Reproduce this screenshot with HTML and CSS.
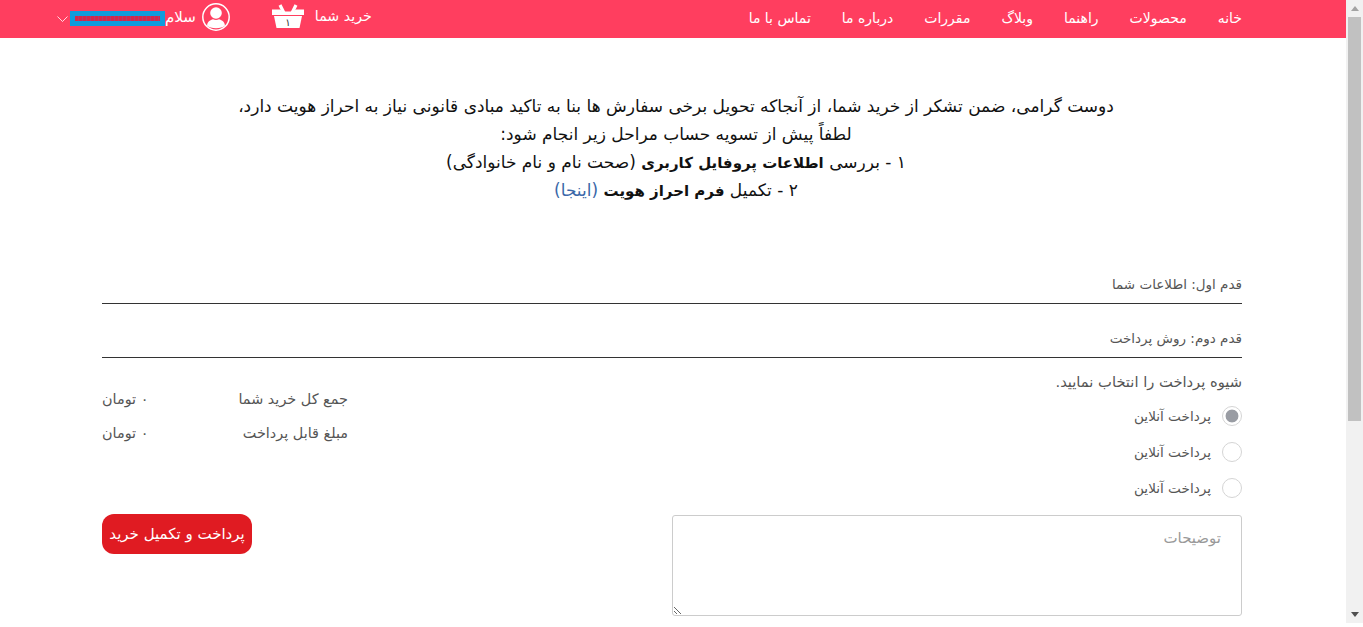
FILE: index.html
```html
<!DOCTYPE html>
<html lang="fa" dir="rtl">
<head>
    <meta charset="UTF-8">
    <meta name="viewport" content="width=device-width, initial-scale=1.0">
    <title>پرداخت و تکمیل خرید</title>
    <link rel="stylesheet" href="styles.css">
</head>
<body>
    <div class="window">
        <div class="scrollbar">
            <span class="arrow-up"></span>
            <span class="thumb"></span>
            <span class="arrow-down"></span>
        </div>
        <div class="page">
            <header class="topbar">
                <nav class="menu">
                    <a href="#">خانه</a>
                    <a href="#">محصولات</a>
                    <a href="#">راهنما</a>
                    <a href="#">وبلاگ</a>
                    <a href="#">مقررات</a>
                    <a href="#">درباره ما</a>
                    <a href="#">تماس با ما</a>
                </nav>
                <div class="topbar-left">
                    <a class="cart" href="#">
                        <span class="cart-label">خرید شما</span>
                        <span class="cart-icon">
                            <svg width="32" height="24" viewBox="0 0 32 24">
                                <path d="M8 1l4 8M24 1l-4 8" stroke="#fff" stroke-width="3.200" fill="none"/>
                                <path d="M0 5.500h8.500l1.500 2h12l1.500-2H32v5.500H0z" fill="#fff"/>
                                <path d="M2 12h28l-2.500 12h-23z" fill="#fff"/>
                            </svg>
                            <span class="cart-count">۱</span>
                        </span>
                    </a>
                    <div class="user">
                        <svg class="avatar" width="28" height="28" viewBox="0 0 28 28">
                            <circle cx="14" cy="14" r="13.200" fill="none" stroke="#fff" stroke-width="1.500"/>
                            <circle cx="14" cy="10" r="5.800" fill="#fff"/>
                            <path d="M5 22.500c.6-4.500 3.500-5.500 6-6.300 1.800 1 4.200 1 6 0 2.500.8 5.400 1.800 6 6.300-1.800 1.800-5 2.800-9 2.800s-7.200-1-9-2.800z" fill="#fff"/>
                        </svg>
                        <span class="hello">سلام</span>
                        <span class="username"><span class="scribble"></span></span>
                        <svg class="chevron" width="11" height="6" viewBox="0 0 11 6">
                            <path d="M.5.500l5 5 5-5" fill="none" stroke="#fff" stroke-opacity=".8"/>
                        </svg>
                    </div>
                </div>
            </header>

            <main class="container">
                <section class="notice">
                    <p>دوست گرامی، ضمن تشکر از خرید شما، از آنجاکه تحویل برخی سفارش ها بنا به تاکید مبادی قانونی نیاز به احراز هویت دارد،</p>
                    <p>لطفاً پیش از تسویه حساب مراحل زیر انجام شود:</p>
                    <p>۱ - بررسی <strong>اطلاعات پروفایل کاربری</strong> (صحت نام و نام خانوادگی)</p>
                    <p>۲ - تکمیل <strong>فرم احراز هویت</strong> <a href="#">(اینجا)</a></p>
                </section>

                <h2 class="step step-first">قدم اول: اطلاعات شما</h2>
                <h2 class="step">قدم دوم: روش پرداخت</h2>

                <div class="checkout">
                    <div class="methods">
                        <p class="methods-title">شیوه پرداخت را انتخاب نمایید.</p>
                        <label class="method"><input type="radio" name="pay" checked> پرداخت آنلاین</label>
                        <label class="method"><input type="radio" name="pay"> پرداخت آنلاین</label>
                        <label class="method"><input type="radio" name="pay"> پرداخت آنلاین</label>
                        <textarea class="note" placeholder="توضیحات"></textarea>
                    </div>
                    <div class="summary">
                        <div class="totals">
                            <div class="total-row"><span class="total-label">جمع کل خرید شما</span><span>۰ تومان</span></div>
                            <div class="total-row"><span class="total-label">مبلغ قابل پرداخت</span><span>۰ تومان</span></div>
                        </div>
                        <button class="pay-btn" type="button">پرداخت و تکمیل خرید</button>
                    </div>
                </div>
            </main>
        </div>
    </div>
</body>
</html>
```

FILE: styles.css
```css
* {
    box-sizing: border-box;
}

html, body {
    height: 100%;
    margin: 0;
    overflow: hidden;
}

body {
    font-family: "DejaVu Sans", "Noto Sans", sans-serif;
    background-color: #fff;
    color: #555;
    font-size: 13px;
}

.window {
    display: flex;
    height: 100vh;
}

.page {
    flex: 1;
    min-width: 0;
    overflow: hidden;
}

/* scrollbar */
.scrollbar {
    flex: none;
    width: 17px;
    height: 623px;
    background-color: #f1f1f1;
    display: flex;
    flex-direction: column;
    align-items: center;
}

.thumb {
    width: 13px;
    height: 404px;
    margin-top: 6px;
    background-color: #c1c1c1;
}

.arrow-up, .arrow-down {
    width: 0;
    height: 0;
    border-left: 4px solid transparent;
    border-right: 4px solid transparent;
}

.arrow-up {
    margin-top: 6px;
    border-bottom: 5px solid #a3a3a3;
}

.arrow-down {
    margin-top: auto;
    margin-bottom: 6px;
    border-top: 5px solid #505050;
}

/* top bar */
.topbar {
    height: 38px;
    background-color: #ff3e5f;
    display: flex;
    align-items: center;
    justify-content: space-between;
    padding: 0 104px 0 57px;
    color: #fff;
}

.topbar a {
    color: #fff;
    text-decoration: none;
}

.menu {
    display: flex;
    gap: 31px;
    font-size: 14px;
    margin-top: -3px;
}

.topbar-left {
    display: flex;
    align-items: center;
    gap: 42px;
}

.cart {
    display: flex;
    align-items: center;
    gap: 11px;
    font-size: 14.200px;
}

.cart-label {
    margin-top: -6px;
}

.cart-icon {
    position: relative;
    display: block;
    width: 32px;
    height: 24px;
    margin-top: -6px;
}

.cart-icon svg {
    display: block;
}

.cart-count {
    position: absolute;
    left: 0;
    right: 0;
    bottom: 0;
    text-align: center;
    font-size: 10px;
    color: #333;
}

.user {
    display: flex;
    align-items: center;
    margin-top: -4px;
}

.avatar {
    display: block;
    margin-left: 6px;
}

.hello {
    font-size: 15px;
}

.username {
    width: 95px;
    height: 15px;
    background-color: #0f9bdc;
    display: flex;
    align-items: center;
    justify-content: center;
    margin-top: 2px;
    margin-left: 2px;
}

.scribble {
    width: 85px;
    height: 5px;
    background: repeating-linear-gradient(90deg, #d5264a 0, #d5264a 3px, #b23a6c 3px, #b23a6c 4px);
}

.chevron {
    margin-top: 3px;
}

/* content */
.container {
    padding: 0 104px 0 102px;
}

.notice {
    padding: 54px 0 0 8px;
    text-align: center;
    color: #111;
    font-size: 17px;
    line-height: 28px;
}

.notice p {
    margin: 0;
}

.notice strong {
    font-size: 15px;
    line-height: 1;
}

.notice a {
    color: #3a67a8;
    text-decoration: none;
}

.step {
    margin: 18px 0 0;
    height: 36px;
    padding-bottom: 11px;
    display: flex;
    align-items: flex-end;
    border-bottom: 1px solid #333;
    font-size: 13.500px;
    font-weight: normal;
    color: #555;
}

.step-first {
    margin-top: 64px;
}

.checkout {
    display: flex;
    justify-content: space-between;
    padding-top: 12px;
}

.methods {
    width: 570px;
    display: flex;
    flex-direction: column;
}

.methods-title {
    margin: 0 0 4px;
    line-height: 24px;
    font-size: 14.700px;
}

.method {
    display: flex;
    align-items: center;
    gap: 11px;
    height: 36px;
    font-size: 13.600px;
}

.method input {
    appearance: none;
    width: 20px;
    height: 20px;
    margin: 0;
    border: 1px solid #d5d5d5;
    border-radius: 50%;
    background-color: #fff;
}

.method input:checked {
    background: radial-gradient(circle, #999ca3 0, #999ca3 6px, #fff 6.800px);
}

.note {
    width: 570px;
    height: 101px;
    margin-top: 9px;
    padding: 13px 20px;
    border: 1px solid #ccc;
    border-radius: 3px;
    font-family: inherit;
    font-size: 15px;
    color: #555;
    outline: none;
}

.note::placeholder {
    color: #999;
}

.summary {
    width: 246px;
    display: flex;
    flex-direction: column;
    align-items: flex-start;
}

.totals {
    width: 100%;
    padding-top: 19px;
}

.total-row {
    display: flex;
    justify-content: space-between;
    height: 34px;
    font-size: 14.400px;
    line-height: 20px;
}

.total-label {
    min-width: 110px;
}

.pay-btn {
    align-self: flex-end;
    width: 150px;
    height: 40px;
    margin-top: 57px;
    border: 0;
    border-radius: 12px;
    background-color: #e01b22;
    color: #fff;
    font-family: inherit;
    font-size: 15px;
}
```
